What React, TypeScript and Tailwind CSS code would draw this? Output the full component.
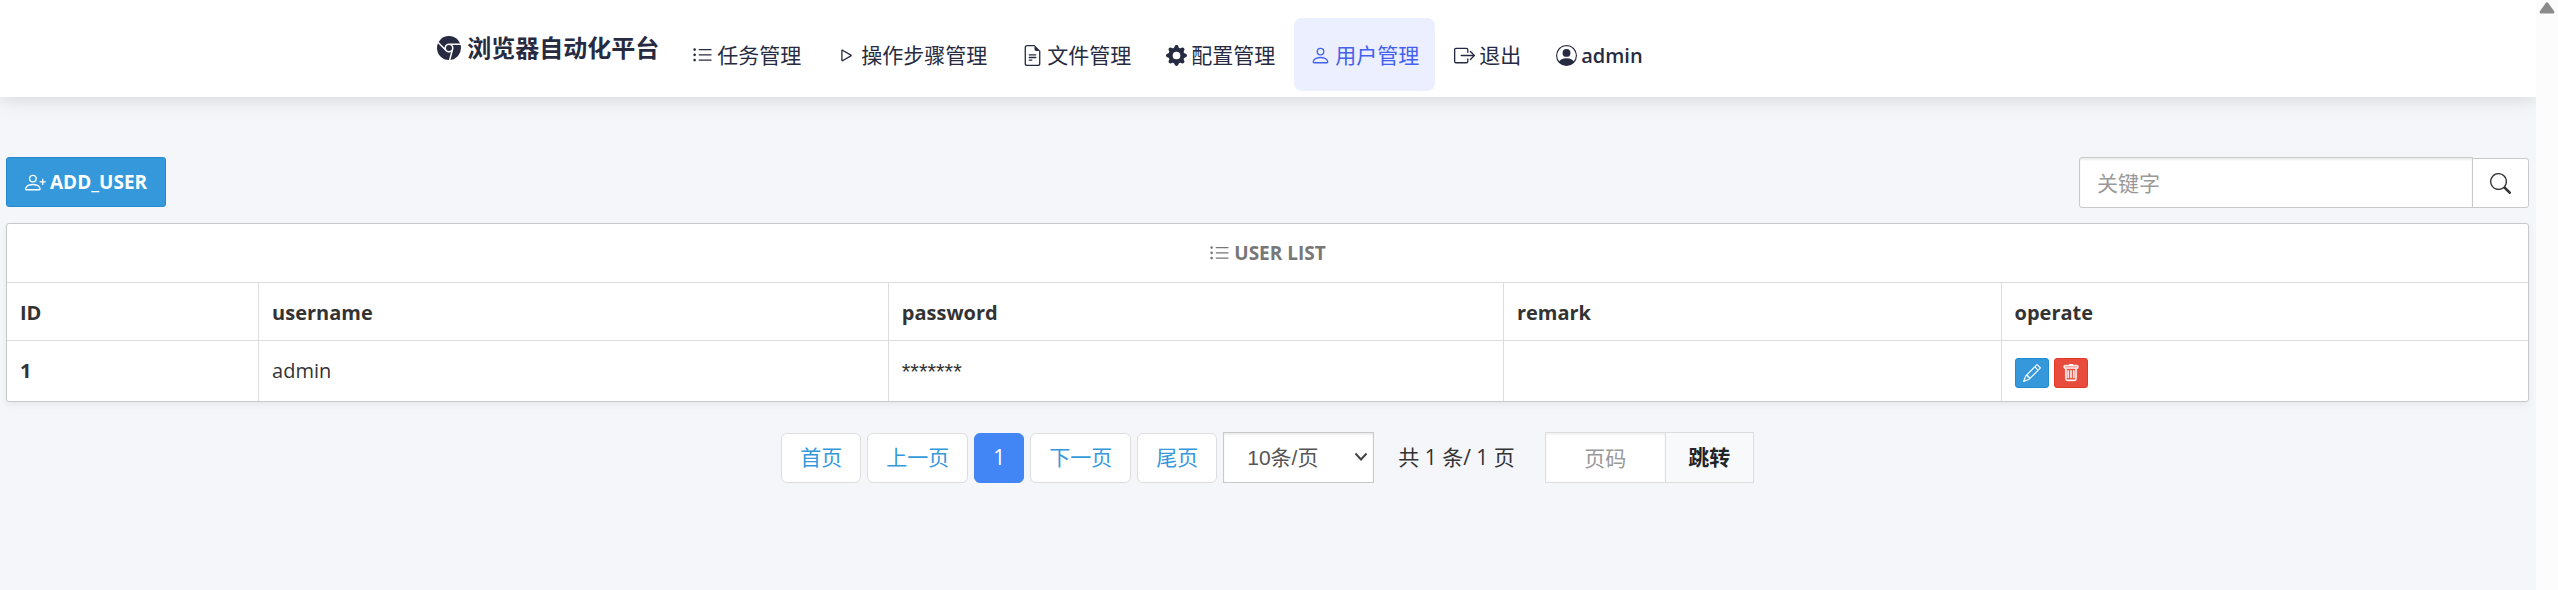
import React from "react";
import {
  BsBoxArrowRight,
  BsBrowserChrome,
  BsFileEarmarkText,
  BsGearFill,
  BsListUl,
  BsPencil,
  BsPerson,
  BsPersonCircle,
  BsPersonPlus,
  BsPlay,
  BsSearch,
  BsTrash,
} from "react-icons/bs";

const navItems = [
  { label: "任务管理", Icon: BsListUl },
  { label: "操作步骤管理", Icon: BsPlay },
  { label: "文件管理", Icon: BsFileEarmarkText },
  { label: "配置管理", Icon: BsGearFill },
  { label: "用户管理", Icon: BsPerson, active: true },
  { label: "退出", Icon: BsBoxArrowRight },
  { label: "admin", Icon: BsPersonCircle, strong: true },
];

const users = [{ id: 1, username: "admin", password: "*******", remark: "" }];

function Navbar() {
  return (
    <header className="bg-white pt-[18px] pb-[6px] shadow-[0_3px_18px_rgba(0,0,0,0.12)]">
      <div className="ml-[17.2%] flex items-start">
        <a href="#home" className="mt-3.5 mr-[17px] ml-px flex items-center gap-1.5 text-2xl font-bold text-[#272b41]">
          <BsBrowserChrome />
          浏览器自动化平台
        </a>
        <nav className="flex gap-[3px]">
          {navItems.map(({ label, Icon, active, strong }) => (
            <a
              key={label}
              href={"#" + label}
              className={
                "flex h-[73px] items-center gap-1 rounded-lg px-4 pt-0.5 " +
                (active ? "bg-[#ebefff] text-[#4361ee] " : "text-[#272b41] ") +
                (strong ? "text-[20px] font-semibold" : "text-[21px]")
              }
            >
              <Icon className="size-[21px]" />
              <span>{label}</span>
            </a>
          ))}
        </nav>
      </div>
    </header>
  );
}

function Toolbar() {
  return (
    <div className="flex items-start justify-between">
      <button
        type="button"
        className="flex h-[50px] items-center gap-1 rounded-[3px] border border-[#208bd1] bg-[#3498db] px-[18px] text-[19px] font-bold text-white"
      >
        <BsPersonPlus className="text-[21px]" />
        ADD_USER
      </button>
      <form className="flex items-end">
        <input
          type="text"
          aria-label="关键字"
          placeholder="关键字"
          className="h-[51px] w-[394px] rounded-l-[3px] border border-[#c8c9cb] bg-white px-[17px] text-[21px] shadow-[inset_0_2px_2px_rgba(0,0,0,0.08)] placeholder:text-[#999]"
        />
        <button
          type="button"
          aria-label="搜索"
          className="-ml-px flex h-[50px] w-[57px] items-center justify-center rounded-r-[3px] border border-[#c8c9cb] bg-white text-[21px] text-[#333]"
        >
          <BsSearch />
        </button>
      </form>
    </div>
  );
}

function UserTable() {
  const cell = "border-t border-l border-[#ddd] px-[13px] text-left first:border-l-0";
  return (
    <section className="mt-[15px] rounded-[3px] border border-[#c8c9cb] bg-white shadow-[0_3px_6px_rgba(0,0,0,0.06)]">
      <h2 className="flex h-[58px] items-center justify-center gap-1 text-[19px] font-bold text-[#777]">
        <BsListUl className="text-[21px]" />
        USER LIST
      </h2>
      <table className="w-full table-fixed border-separate border-spacing-0 text-[20px] text-[#333]">
        <colgroup>
          <col className="w-[9.96%]" />
          <col className="w-[24.98%]" />
          <col className="w-[24.4%]" />
          <col className="w-[19.74%]" />
          <col />
        </colgroup>
        <thead>
          <tr className="h-[58px]">
            {["ID", "username", "password", "remark", "operate"].map((name) => (
              <th key={name} className={cell + " pt-0.5"}>
                {name}
              </th>
            ))}
          </tr>
        </thead>
        <tbody>
          {users.map((user) => (
            <tr key={user.id} className="h-[61px]">
              <th className={cell}>{user.id}</th>
              <td className={cell}>{user.username}</td>
              <td className={cell}>
                <span className="font-['Liberation_Sans',sans-serif] text-[22px]">{user.password}</span>
              </td>
              <td className={cell}>{user.remark}</td>
              <td className={cell}>
                <div className="flex gap-[5px] pt-1 text-lg text-white">
                  <button
                    type="button"
                    aria-label="编辑"
                    className="flex h-[30px] w-[34px] items-center justify-center rounded-[3px] border border-[#208bd1] bg-[#3498db]"
                  >
                    <BsPencil />
                  </button>
                  <button
                    type="button"
                    aria-label="删除"
                    className="flex h-[30px] w-[34px] items-center justify-center rounded-[3px] border border-[#e43725] bg-[#e74c3c]"
                  >
                    <BsTrash className="stroke-current stroke-[0.4]" />
                  </button>
                </div>
              </td>
            </tr>
          ))}
        </tbody>
      </table>
    </section>
  );
}

function PageLink({ children, active }: { children: React.ReactNode; active?: boolean }) {
  return (
    <a
      href="#page"
      className={
        "flex h-[50px] items-center rounded-md border px-[18px] " +
        (active ? "border-[#4285f4] bg-[#4285f4] text-white" : "border-[#ddd] bg-white text-[#3498db]")
      }
    >
      {children}
    </a>
  );
}

function Pagination() {
  return (
    <div className="mt-[30px] flex items-center justify-center text-[21px]">
      <nav className="flex gap-1.5">
        <PageLink>首页</PageLink>
        <PageLink>上一页</PageLink>
        <PageLink active>1</PageLink>
        <PageLink>下一页</PageLink>
        <PageLink>尾页</PageLink>
      </nav>
      <div className="relative ml-1.5">
        <select
          aria-label="每页条数"
          className="block h-[51px] w-[151px] appearance-none border border-[#c8c9cb] bg-white pl-[23px] font-['Liberation_Sans','Noto_Sans_CJK_SC',sans-serif] text-[21px] text-[#555] shadow-[inset_0_2px_2px_rgba(0,0,0,0.08)]"
        >
          <option>10条/页</option>
        </select>
        <svg
          viewBox="0 0 14 10"
          className="pointer-events-none absolute top-5 right-[6px] h-2.5 w-3.5 fill-none stroke-[#444] stroke-2"
        >
          <path d="M1.5 1.5 7 7.5l5.500-6" />
        </svg>
      </div>
      <span className="ml-6 text-[#333]">共 1 条/ 1 页</span>
      <form className="ml-[30px] flex">
        <input
          type="text"
          aria-label="页码"
          placeholder="页码"
          className="h-[51px] w-[121px] border border-[#ddd] bg-white text-center shadow-[inset_0_2px_2px_rgba(0,0,0,0.06)] placeholder:text-[#999]"
        />
        <button type="button" className="-ml-px h-[51px] w-[89px] border border-[#ddd] bg-[#f8f9fa] font-bold text-[#212529]">
          跳转
        </button>
      </form>
    </div>
  );
}

export default function App() {
  return (
    <div className="flex min-h-screen bg-[#f5f6fa] font-['Open_Sans','Noto_Sans_CJK_SC',sans-serif]">
      <div className="min-w-0 flex-1">
        <Navbar />
        <main className="px-1.5 pt-[60px] pr-[7px]">
          <Toolbar />
          <UserTable />
          <Pagination />
        </main>
      </div>
      <div className="flex w-[22px] justify-center bg-[#fcfcfc] pt-0.5">
        <svg viewBox="0 0 16 12" className="h-3 w-4 fill-[#8b8b8b]">
          <path d="M6.600 1.200Q8-.5 9.400 1.200L15 9Q16 11.500 14 11.500H2Q0 11.500 1 9Z" />
        </svg>
      </div>
    </div>
  );
}
